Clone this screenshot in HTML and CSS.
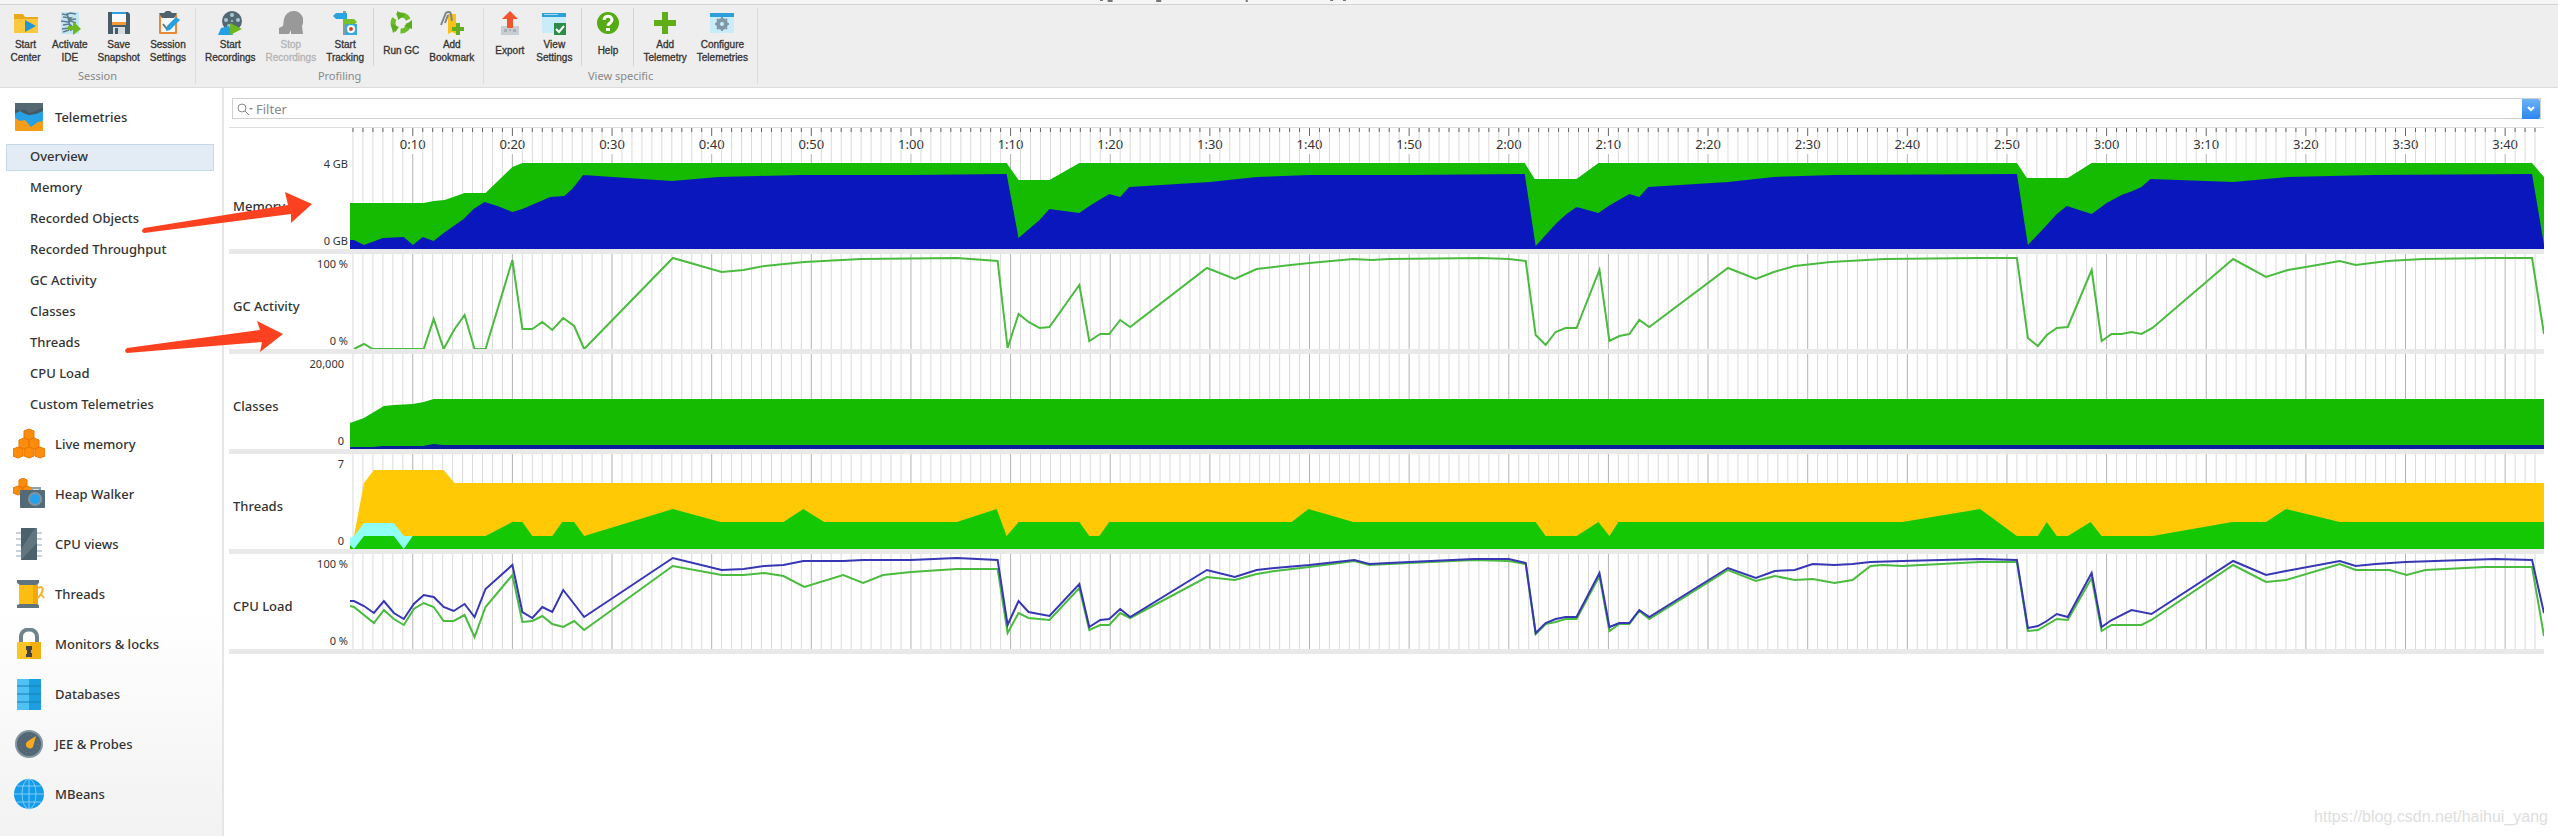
FILE: index.html
```html
<!DOCTYPE html>
<html lang="en">
<head>
  <meta charset="UTF-8">
  <meta name="viewport" content="width=device-width, initial-scale=1.0">
  <title>Telemetries - Overview</title>
  <link rel="stylesheet" href="styles.css">
</head>
<body>

  <!-- Window title edge -->
  <div class="titlebar">
    <svg width="100%" height="4" aria-hidden="true">
      <g fill="#777">
        <rect x="43%" width="3" height="1"/>
        <rect x="43.3%" width="5" height="2"/>
        <rect x="45.2%" width="5" height="2"/>
        <rect x="48.7%" width="2" height="2"/>
        <rect x="52%" width="3" height="1"/>
        <rect x="52.5%" width="3" height="1"/>
      </g>
    </svg>
  </div>

  <header class="toolbar">
    <div class="group">
      <div class="tools">
        <button class="tool">
          <svg viewBox="0 0 24 24"><path fill="#e9a91c" d="M0 3h9l2 3h13v5H0z"/><path fill="#fbc93d" d="M0 8h24v14H0z"/><path fill="#2196d3" d="M11 9l11 6-11 6z"/></svg>
          <span>Start<br>Center</span>
        </button>
        <button class="tool">
          <svg viewBox="0 0 24 24"><path fill="#c3e6f5" d="M3 1h18v22H3z"/><path fill="none" stroke="#5c7d8e" stroke-width="1.5" d="M4 3l5 1 3-2 6 1M5 6l8 1-3 2 8-1M3 10l7 1 3-1 5 2M5 14l6-1 3 2M4 18l7-1M5 21l6-2M9 2l4 18"/><path fill="#6cba1e" d="M10 15h5v-5l8 8-8 6v-5h-5z"/></svg>
          <span>Activate<br>IDE</span>
        </button>
        <button class="tool">
          <svg viewBox="0 0 24 24"><path fill="#455d68" d="M1 1h20l2 2v20H1z"/><path fill="#f6f8fa" d="M5 1h14v12H5z"/><path fill="#f39a35" d="M5 11h14v3H5z"/><path fill="#2da0df" d="M5 1h14v2H5z"/><path fill="#d4dce0" d="M6 16h12v7H6z"/><path fill="#455d68" d="M8 17h3v6H8z"/></svg>
          <span>Save<br>Snapshot</span>
        </button>
        <button class="tool">
          <svg viewBox="0 0 24 24"><rect x="3" y="3" width="18" height="20" rx="1" fill="#e8893a"/><path fill="#f7fafb" d="M5 6h14v15H5z"/><path fill="#4d626c" d="M3 2h5l2-2h4l2 2h5l-3 5H6z"/><path fill="none" stroke="#657983" stroke-width="2" d="M7 13l4 5 3-4"/><path fill="#28a0df" d="M20 6l4 3-10 10-4 1 1-5z"/></svg>
          <span>Session<br>Settings</span>
        </button>
      </div>
      <div class="group-name">Session</div>
    </div>

    <div class="group">
      <div class="tools">
        <button class="tool">
          <svg viewBox="0 0 24 24"><circle cx="14" cy="10" r="10" fill="#526873"/><g fill="#a9c6d3"><circle cx="14" cy="4" r="2"/><circle cx="20" cy="9" r="2"/><circle cx="8" cy="9" r="2"/><circle cx="11" cy="15" r="2"/><circle cx="14" cy="10" r="1"/></g><path fill="#25a0e2" d="M3 17l8-2 4 9H0z"/><path fill="#6bb91f" d="M12 12l12 6-12 6z"/></svg>
          <span>Start<br>Recordings</span>
        </button>
        <button class="tool" disabled>
          <svg viewBox="0 0 24 24"><path fill="#999" d="M14 0a10 10 0 0 1 9 15l1 8H12v-4l-2 4H0v-6l4-2 1-7a10 10 0 0 1 9-8z"/></svg>
          <span>Stop<br>Recordings</span>
        </button>
        <button class="tool">
          <svg viewBox="0 0 24 24"><path fill="#8b9aa2" d="M10 0h3v24h-3z"/><path fill="#2ca4df" d="M3 2h11v6H3L0 5z"/><path fill="#7ac02a" d="M10 8h11l3 3-3 3H10z"/><path fill="#3aa9dc" d="M12 13h12v11H12z"/><circle cx="18" cy="18" r="4" fill="#fff"/><circle cx="18" cy="18" r="2" fill="#d44330"/></svg>
          <span>Start<br>Tracking</span>
        </button>
        <i class="rule"></i>
        <button class="tool">
          <svg viewBox="0 0 24 24"><circle cx="12" cy="12" r="8" fill="none" stroke="#6bbd2e" stroke-width="5" stroke-dasharray="13 3.7"/><path fill="#5aab1f" d="M8 0l8 4-7 5zM23 9v9l-8-3zM4 22l-2-9 8 3z"/></svg>
          <span>Run GC</span>
        </button>
        <button class="tool">
          <svg viewBox="0 0 24 24"><path fill="#fbc11b" d="M8 3h8v20l-4-2-4 2z"/><path fill="none" stroke="#7c878c" stroke-width="2" d="M1 14l4-10c1-4 6-4 6 0l1 6M5 12l3-8"/><path fill="#62ae20" d="M16 12h4v4h4v4h-4v4h-4v-4h-4v-4h4z"/></svg>
          <span>Add<br>Bookmark</span>
        </button>
      </div>
      <div class="group-name">Profiling</div>
    </div>

    <div class="group">
      <div class="tools">
        <button class="tool">
          <svg viewBox="0 0 24 24"><path fill="#c7cdd0" d="M3 15h18v9H3z"/><path fill="#a7b0b5" d="M6 18h3v3H6zM11 18h2v2h-2zM15 18h3v3h-3z"/><path fill="#f2562f" d="M12 0l8 8h-5v9H9V8H4z"/></svg>
          <span>Export</span>
        </button>
        <button class="tool">
          <svg viewBox="0 0 24 24"><path fill="#c8ecf8" d="M0 2h24v20H0z"/><path fill="#2d9fda" d="M0 2h24v4H0z"/><path fill="#a9ddf3" d="M2 3h14v1H2z"/><path fill="#2d8c48" d="M12 12h12v12H12z"/><path fill="none" stroke="#fff" stroke-width="2" d="M14 18l3 3 5-6"/></svg>
          <span>View<br>Settings</span>
        </button>
        <i class="rule"></i>
        <button class="tool">
          <svg viewBox="0 0 24 24"><circle cx="12" cy="12" r="11" fill="#55ab14"/><path fill="none" stroke="#fff" stroke-width="3" d="M8 9c0-5 8-5 8 0 0 3-4 3-4 6"/><path fill="#fff" d="M10 17h4v3h-4z"/></svg>
          <span>Help</span>
        </button>
        <i class="rule"></i>
        <button class="tool">
          <svg viewBox="0 0 24 24"><path fill="#5fae18" d="M9 1h6v8h8v6h-8v8H9v-8H1V9h8z"/></svg>
          <span>Add<br>Telemetry</span>
        </button>
        <button class="tool">
          <svg viewBox="0 0 24 24"><path fill="#c8ecf8" d="M0 2h24v20H0z"/><path fill="#2d9fda" d="M0 2h24v4H0z"/><circle cx="12" cy="13" r="4" fill="none" stroke="#8098aa" stroke-width="4"/><path stroke="#8098aa" stroke-width="2" d="M12 6v3M12 17v3M5 13h3M16 13h3M7 8l2 2M15 16l2 2M17 8l-2 2M9 16l-2 2"/></svg>
          <span>Configure<br>Telemetries</span>
        </button>
      </div>
      <div class="group-name">View specific</div>
    </div>
  </header>

  <div class="window">
    <nav class="sidebar">
      <a class="section" href="#">
        <svg viewBox="0 0 32 32"><rect x="2" y="2" width="28" height="28" rx="1" fill="#f59d16"/><path fill="#536873" d="M2 2h28v12H2z"/><path fill="#27a1e6" d="M2 13l5-3 5 3 4 1 7-3 7-1v10l-5 1-7 5-6-7-5 1-5-3z"/><path fill="#455964" d="M2 8l5 2 4-2 5 4 7-2 7-4v4l-7 3-7 1-9-4-5 2z"/></svg>
        Telemetries
      </a>
      <ul class="views">
        <li><a class="active" href="#">Overview</a></li>
        <li><a href="#">Memory</a></li>
        <li><a href="#">Recorded Objects</a></li>
        <li><a href="#">Recorded Throughput</a></li>
        <li><a href="#">GC Activity</a></li>
        <li><a href="#">Classes</a></li>
        <li><a href="#">Threads</a></li>
        <li><a href="#">CPU Load</a></li>
        <li><a href="#">Custom Telemetries</a></li>
      </ul>
      <a class="section" href="#">
        <svg viewBox="0 0 32 32"><g fill="#fb8c0c" stroke="#e97700"><path d="M16 1l5 2v7l-5 2-5-2V3z"/><path d="M11 10l5 2v7l-5 2-5-2v-7zM21 10l5 2v7l-5 2-5-2v-7z"/><path d="M5 19l5 2v7l-5 2-5-2v-7zM16 19l5 2v7l-5 2-5-2v-7zM27 19l5 2v7l-5 2-5-2v-7z"/></g></svg>
        Live memory
      </a>
      <a class="section" href="#">
        <svg viewBox="0 0 32 32"><g fill="#fb8c0c" stroke="#e97700"><path d="M10 0l4 2v6l-4 2-4-2V2z"/><path d="M5 8l5 2v5l-5 2-5-2v-5zM14 8l5 2v5l-5 2-5-2v-5z"/></g><path fill="#8fa3ad" d="M18 9h10v4H18z"/><path fill="#d5dde0" d="M20 11h6v2h-6z"/><rect x="7" y="12" width="25" height="18" rx="1" fill="#546a76"/><circle cx="22" cy="21" r="7" fill="#8095a0"/><circle cx="22" cy="21" r="5" fill="#25a2ee"/></svg>
        Heap Walker
      </a>
      <a class="section" href="#">
        <svg viewBox="0 0 32 32"><path stroke="#b5c4d0" stroke-width="1.5" d="M3 5h26M3 11h26M3 17h26M3 23h26M3 28h26"/><path fill="#4b616c" d="M8 0h16v32H8z"/><path fill="#61767f" d="M24 0v15L8 32V21L22 0z"/></svg>
        CPU views
      </a>
      <a class="section" href="#">
        <svg viewBox="0 0 32 32"><path fill="#fdbd12" d="M6 4h19v24H6z"/><path fill="#f4a90b" d="M20 4h5v24h-5z"/><path fill="#5f747e" d="M4 2h22v3l-3 2H7L4 5zM4 30h22v-3l-3-1H7l-3 1z"/><path fill="none" stroke="#f4b52c" stroke-width="2" d="M25 10c5-3 6 1 3 6l3 4M28 16l-3 4"/></svg>
        Threads
      </a>
      <a class="section" href="#">
        <svg viewBox="0 0 32 32"><path fill="none" stroke="#6f838d" stroke-width="4" d="M8 16V9c0-10 16-10 16 0v7"/><rect x="4" y="14" width="24" height="17" rx="1" fill="#fdc428"/><path fill="#f4b010" d="M17 14h11v17H17z"/><path fill="#444" d="M13 18h6v4h-1v3h1v4h-6v-3h1v-4h-1z"/></svg>
        Monitors &amp; locks
      </a>
      <a class="section" href="#">
        <svg viewBox="0 0 32 32"><path fill="#4fc2f5" d="M4 1h13v31H4z"/><path fill="#1c9fe0" d="M16 1h12v31H16z"/><path stroke="#187fb5" d="M4 8h24M4 16h24M4 24h24"/></svg>
        Databases
      </a>
      <a class="section" href="#">
        <svg viewBox="0 0 32 32"><circle cx="16" cy="16" r="13" fill="#526773" stroke="#8496a0" stroke-width="2"/><circle cx="16" cy="16" r="9" fill="none" stroke="#6d828d" stroke-dasharray="1 3"/><path fill="#f5ab20" d="M23 8l-3 11a4 4 0 1 1-5-6z"/></svg>
        JEE &amp; Probes
      </a>
      <a class="section" href="#">
        <svg viewBox="0 0 32 32"><circle cx="16" cy="16" r="15" fill="#149bea"/><g fill="none" stroke="#83cdf5"><ellipse cx="16" cy="16" rx="7" ry="15"/><path d="M16 1v30M1 16h30M4 8h24M4 24h24"/></g></svg>
        MBeans
      </a>
    </nav>

    <main class="content">
      <div class="filter">
        <svg viewBox="0 0 16 14" aria-hidden="true"><circle cx="5" cy="6" r="4" fill="none" stroke="#888"/><path stroke="#888" d="M8 9l4 4"/><path fill="#888" d="M12 6h4l-2 2z"/></svg>
        <input type="text" id="filter" placeholder="Filter" aria-label="Filter">
        <button class="filter-btn" aria-label="Show filters"><svg viewBox="0 0 10 10"><path fill="none" stroke="#fff" stroke-width="2" d="M2 3l3 3 3-3"/></svg></button>
      </div>

      <div class="telemetry">
        <div class="row ruler-row">
          <div class="label"></div>
          <svg class="ruler" id="ruler"></svg>
        </div>
        <div class="row">
          <div class="label"><h2>Memory</h2><div class="axis"><span>4 GB</span><span>0 GB</span></div></div>
          <svg class="plot" id="memory"></svg>
        </div>
        <div class="row">
          <div class="label"><h2>GC Activity</h2><div class="axis"><span>100 %</span><span>0 %</span></div></div>
          <svg class="plot" id="gc"></svg>
        </div>
        <div class="row">
          <div class="label"><h2>Classes</h2><div class="axis count"><span>20,000</span><span>0</span></div></div>
          <svg class="plot" id="classes"></svg>
        </div>
        <div class="row">
          <div class="label"><h2>Threads</h2><div class="axis count"><span>7</span><span>0</span></div></div>
          <svg class="plot" id="threads"></svg>
        </div>
        <div class="row">
          <div class="label"><h2>CPU Load</h2><div class="axis"><span>100 %</span><span>0 %</span></div></div>
          <svg class="plot" id="cpu"></svg>
        </div>
      </div>
    </main>
  </div>

  <!-- Callout arrows -->
  <svg class="arrows" width="320" height="360" aria-hidden="true">
    <path d="M144 228L288 205L285 192L312 204L291 223L291 214L144 233Q140 231 144 228z"/>
    <path d="M127 348L260 330L257 321L283 334L260 352L262 342L127 353Q123 351 127 348z"/>
  </svg>
  <div class="watermark">https://blog.csdn.net/haihui_yang</div>

  <script src="script.js"></script>
</body>
</html>
```
FILE: styles.css
```css
* {
  box-sizing: border-box;
}

body {
  margin: 0;
  min-height: 100vh;
  display: flex;
  flex-direction: column;
  position: relative;
  background-color: #fff;
  color: #333;
  font-family: "Noto Sans", "Open Sans", sans-serif;
  font-size: 13px;
}

a {
  color: inherit;
  text-decoration: none;
}

button {
  border: none;
  background: none;
  margin: 0;
  color: inherit;
}

/* Toolbar */
.titlebar {
  height: 5px;
  background-color: #f6f6f6;
  border-bottom: 1px solid #d2d2d2;
}

.titlebar svg {
  display: block;
}

.toolbar {
  display: flex;
  height: 83px;
  padding: 3px 0;
  background-color: #eee;
  border-bottom: 1px solid #dcdcdc;
}

.group {
  display: flex;
  flex-direction: column;
  border-right: 1px solid #dcdcdc;
}

.tools {
  display: flex;
  padding: 0 4px;
  height: 60px;
}

.tool {
  display: flex;
  flex-direction: column;
  align-items: center;
  min-width: 43px;
  padding: 3px 5px 0;
  font-family: "Liberation Sans", Arial, sans-serif;
  font-size: 10px;
  line-height: 13px;
  -webkit-text-stroke: 0.3px;
}

.tool svg {
  width: 24px;
  height: 24px;
}

.tool span {
  display: flex;
  align-items: center;
  height: 31px;
}

.tool:disabled {
  color: #b4b4b4;
}

.rule {
  width: 1px;
  margin: 0 4px;
  background-color: #d4d4d4;
}

.group-name {
  text-align: center;
  font-size: 11px;
  line-height: 20px;
  color: #888;
}

/* Sidebar */
.window {
  display: flex;
  flex: 1;
}

.sidebar {
  width: 224px;
  flex-shrink: 0;
  padding-top: 4px;
  border-right: 2px solid #e6e6e6;
  background: linear-gradient(#fff 70%, #f2f2f2);
}

.section {
  display: flex;
  align-items: center;
  gap: 10px;
  height: 50px;
  padding-left: 13px;
  font-weight: 500;
}

.section svg {
  width: 32px;
  height: 32px;
}

.views {
  list-style: none;
  margin: 0;
  height: 277px;
  padding: 0 8px 0 6px;
}

.views li {
  height: 31px;
  padding: 2px 0;
}

.views a {
  display: block;
  height: 27px;
  padding-left: 23px;
  border: 1px solid transparent;
  line-height: 23px;
  font-weight: 500;
}

.views .active {
  background-color: #e3ecf4;
  border-color: #c6d9e8;
}

/* Filter */
.content {
  flex: 1;
  min-width: 0;
  padding: 10px 14px 0 5px;
}

.filter {
  display: flex;
  align-items: center;
  height: 21px;
  margin: 0 3px;
  border: 1px solid #d0d0d0;
  padding-left: 4px;
}

.filter > svg {
  width: 16px;
  height: 14px;
}

.filter input {
  flex: 1;
  border: none;
  outline: none;
  padding: 0 3px;
  font: inherit;
  background: none;
}

.filter input::placeholder {
  color: #888;
}

.filter-btn {
  width: 18px;
  height: 20px;
  padding: 4px;
  border-radius: 0 2px 2px 0;
  background: linear-gradient(#6bb3f8, #2b86f0);
}

.filter-btn svg {
  display: block;
}

/* Telemetry rows */
.telemetry {
  margin-top: 8px;
  border-top: 1px solid #dedede;
}

.row {
  display: flex;
  height: 100px;
  border-bottom: 5px solid #e9e9e9;
}

.ruler-row {
  height: 26px;
  border-bottom: none;
}

.label {
  display: flex;
  justify-content: space-between;
  width: 121px;
  flex-shrink: 0;
  padding: 0 2px 0 4px;
}

.label h2 {
  margin: 0;
  padding-top: 8px;
  align-self: center;
  font-size: 13px;
  font-weight: 500;
  white-space: nowrap;
}

.axis {
  display: flex;
  flex-direction: column;
  justify-content: space-between;
  padding-top: 2px;
  text-align: right;
  font-size: 11px;
  line-height: 16px;
  white-space: nowrap;
}

.count {
  padding-right: 4px;
}

.plot, .ruler {
  flex: 1;
  min-width: 0;
  height: 100%;
}

.ruler text {
  font-size: 13px;
  text-anchor: middle;
  fill: #333;
}

.minor {
  stroke: #dadada;
}

.major {
  stroke: #b4b4b4;
}

.tick {
  stroke: #666;
}

.line {
  fill: none;
  stroke-width: 2;
}

/* Overlays */
.arrows {
  position: absolute;
  top: 0;
  left: 0;
  fill: #fc4120;
  pointer-events: none;
}

.watermark {
  position: absolute;
  right: 10px;
  bottom: 9px;
  font-family: "Liberation Sans", sans-serif;
  font-size: 16px;
  line-height: 20px;
  color: #dedede;
}
```
FILE: script.js
```js
const START = 3.7;
const END = 223.9;
const HEIGHT = 95;

// Points are "seconds,level" with the level measured up from the base line
const charts = {
  memory: [
    { area: '#14bb00', points: '3.7,46 11.1,46 12.1,48 13.2,49 15.2,56 17.3,56 20,82 21,86 69.6,86 70.8,69 73.9,69 76.9,86 121.6,86 122.6,70 126.8,70 129,86 171,86 172,71 176.1,71 178.5,86 222.7,86 223.9,72' },
    { area: '#0a17bd', points: '3.7,9 4.1,9 5.1,4 7,11 9.1,12 10,4 11,12 12.1,8 13.1,16 15.1,30 16.1,40 17.2,47 18.5,43 20,37 21,40 23.8,52 25.2,53 26,60 27.1,74 36,68 40.7,72 44.6,73 48.9,74 60,74 69.6,75 70.8,11 72.9,29 73.9,40 76.9,36 77.9,43 79.9,55 81,52 81.9,62 90,67 94.7,72 100,74 110,74 121.6,75 122.7,3 123.7,14 124.7,25 125.8,35 126.8,42 129,36 130,43 132.1,55 133.1,52 134,62 142,67 146.6,72 152.7,74 171,75 172.1,4 173.9,23 175,35 176,43 178.5,35 180,46 181.5,54 182.6,58 183.5,62 184.4,70 192.7,67 198.2,72 206.8,74 222.7,75 223.9,4' }
  ],
  gc: [
    { line: '#4abb3f', points: '4.1,0 5.1,5 6,0 11.1,0 12.1,30 13.1,0 14.2,20 15.2,34 16.2,0 17.3,0 20,89 21,20 22,20 23,27 24,19 25.1,31 26.2,23 27.2,0 36.1,91 41,77 43.2,79 45.3,83 49.3,87 55,90 64.6,91 68.7,88 69.7,1 70.8,35 71.8,27 72.9,21 73.9,22 76.9,64 77.9,8 79,15 79.9,15 81,29 82,22 89.7,81 92.5,70 94.7,80 97.2,83 100,86 104.4,90 106.2,89 108,90 117.2,91 120,90 121.7,88 122.7,14 123.7,4 124.7,17 125.7,21 126.8,21 129.1,79 130.1,8 131.1,13 132.1,15 133.1,29 134.1,22 142,81 144.8,70 146.6,77 148.7,83 152.3,87 157.7,90 167,91 171,91 172.1,11 173.1,3 174,14 175,21 176.1,22 178.5,79 179.5,8 180.5,15 181.5,15 182.5,17 183.5,15 184.6,21 192.7,90 196,72 198.2,79 200,82 203.4,88 205,84 208.2,88 211.8,90 218.5,91 222.7,91 223.9,15' }
  ],
  classes: [
    { area: '#14bb00', points: '3.7,26 5.1,31 6.1,37 7.1,43 8.1,44 10,45 11.1,47 12.1,50 223.9,50' },
    { area: '#0a1f9c', points: '3.7,2 6,2 7,3 11,3 12.1,5 13,4 223.9,4' }
  ],
  threads: [
    { area: '#ffca05', points: '3.7,0 4.1,13 5.1,66 6.1,79 13.1,79 14.2,66 223.9,66' },
    { area: '#8ffff5', points: '3.7,11 4.1,13 5.1,26 8.1,26 9.1,13 10,13 10,0' },
    { area: '#14c904', points: '3.7,4 4.1,0 5.1,13 8.1,13 9.1,0 10,13 17.3,13 20,27 21,27 22,13 24,13 25,27 26.2,27 27.2,13 36.1,40 40.9,27 47.2,27 49.2,40 51.3,27 64.6,27 68.6,40 69.6,13 70.8,27 76.9,27 77.9,13 78.9,13 79.9,27 98.2,27 99.9,40 104.4,27 122.7,27 123.7,13 126.8,13 129,27 130.1,13 131,27 159.5,27 167.3,40 171,13 173.1,13 174,27 175,13 176.1,13 178.4,27 179.5,13 184.6,13 192.6,27 196,27 198,40 203.4,27 223.9,27' }
  ],
  cpu: [
    { line: '#4abb3f', points: '3.7,43 4.1,42 6.1,26 7.1,39 8.1,30 9.1,24 10.1,40 11.1,46 12.1,42 13.1,28 14.1,28 15.2,34 16.2,12 17.3,42 20,74 21,27 22,28 23,33 24,25 25.1,22 26.2,28 27.2,19 36.1,83 41,74 43.2,74 45.3,76 47.2,73 49.3,62 53.2,74 55.2,66 57.2,74 60,77 64.6,80 68.7,80 69.7,16 70.8,36 71.8,31 73.9,29 76.9,61 77.9,19 79,24 79.9,24 81,36 82,31 89.7,72 92.5,69 94.7,75 96.5,78 100,82 104.5,88 106,84 110,86 116.5,89 120,88 121.7,85 122.7,15 123.7,25 124.7,27 125.7,30 126.8,30 129.1,73 130.1,18 131.1,25 132.1,25 133.1,38 134.1,30 142,79 144.8,68 146.7,73 148.7,69 150.5,70 152.7,66 154.5,69 156.3,83 157.5,84 159.5,83 167.3,87 171,87 172.1,18 173.1,19 175,30 176.1,29 178.5,71 179.5,18 180.5,24 183.5,24 184.5,29 192.7,84 196,67 198,69 203.4,85 205,79 208.4,79 210.1,74 212,79 218,82 222.7,82 223.9,13' },
    { line: '#3736b4', points: '3.7,48 4.1,48 5.1,43 6.1,36 7.1,48 8.1,36 9.1,30 10.1,45 11.1,54 12.1,52 13.1,42 14.1,38 15.2,45 16.2,32 17.3,60 20,84 21,37 22,31 23,42 24,37 25.1,59 26.2,45 27.2,32 36.1,91 41,79 43.2,80 45.3,83 47.2,84 49.2,88 53.2,88 55.2,89 60,89 64.6,91 68.7,89 69.7,24 70.8,48 71.8,37 73.9,33 76.9,65 77.9,22 79,29 79.9,30 81,40 82,32 89.7,79 92.5,72 94.7,79 96.5,81 100,84 104.5,89 106,85 110,87 116.5,90 120,90 121.7,86 122.7,16 123.7,26 124.7,30 125.7,32 126.8,32 129.1,76 130.1,22 131.1,26 132.1,26 133.1,39 134.1,32 142,81 144.8,71 146.7,78 148.7,79 150.5,85 152.7,84 154.5,85 156.3,87 159.5,88 167.3,90 171,89 172.1,21 173.1,23 174,28 175,35 176.1,32 178.5,76 179.5,22 180.5,29 182.5,39 184.5,35 192.7,88 196,74 198,78 203.4,88 205,83 207,85 210,87 219,90 222.7,89 223.9,36' }
  ]
};

function percent(second) {
  return ((second - START) / (END - START) * 100).toFixed(3) + '%';
}

function vertical(second, y1, y2, name) {
  const x = percent(second);
  return `<line class="${name}" x1="${x}" x2="${x}" y1="${y1}" y2="${y2}"/>`;
}

function drawGrid() {
  let html = '';
  for (let s = 4; s < END; s++) {
    html += vertical(s, 0, HEIGHT, s % 10 === 0 ? 'major' : 'minor');
  }
  return html;
}

function drawSeries(series) {
  const points = series.points.split(' ').map(p => {
    const [second, level] = p.split(',').map(Number);
    return [second - START, HEIGHT - level];
  });
  const path = points.map(p => p.join(',')).join(' ');
  if (series.line) {
    return `<polyline class="line" vector-effect="non-scaling-stroke" stroke="${series.line}" points="${path}"/>`;
  }
  const last = points[points.length - 1][0];
  return `<polygon fill="${series.area}" points="0,${HEIGHT} ${path} ${last},${HEIGHT}"/>`;
}

function drawRuler() {
  let html = '';
  for (let s = 4; s < END; s++) {
    if (s % 10 === 0) {
      const time = Math.floor(s / 60) + ':' + String(s % 60).padStart(2, '0');
      html += vertical(s, 0, 8, 'tick');
      html += `<text x="${percent(s)}" y="21">${time}</text>`;
    } else {
      html += vertical(s, 0, 27, 'minor') + vertical(s, 0, 4, 'tick');
    }
  }
  document.getElementById('ruler').innerHTML = html;
}

drawRuler();
Object.keys(charts).forEach(id => {
  document.getElementById(id).innerHTML = drawGrid() +
    `<svg viewBox="0 0 ${END - START} ${HEIGHT}" preserveAspectRatio="none" width="100%" height="100%">` +
    charts[id].map(drawSeries).join('') + '</svg>';
});
```
